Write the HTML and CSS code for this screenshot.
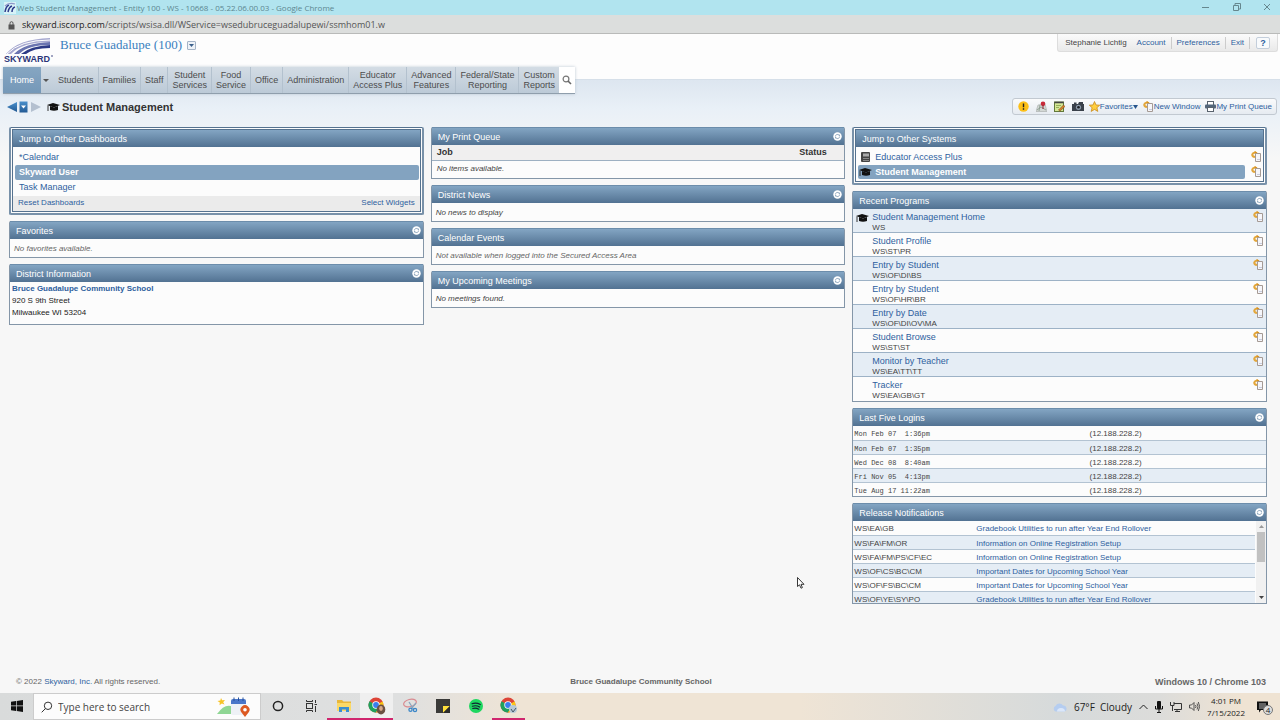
FILE: index.html
```html
<!DOCTYPE html>
<html lang="en">
<head>
	<meta charset="utf-8">
	<title>Web Student Management - Entity 100 - WS</title>
	<link rel="stylesheet" href="styles.css">
</head>
<body>
	<!-- shared icons -->
	<svg class="defs" width="0" height="0">
		<defs>
			<linearGradient id="blueGrad" x1="0" y1="0" x2="0" y2="1">
				<stop offset="0" stop-color="#4a90cc"/><stop offset="1" stop-color="#235a94"/>
			</linearGradient>
			<symbol id="cap" viewBox="0 0 13 10">
				<path d="M0 3 L6 1 L13 3 L7 5.400 Z" fill="#111"/>
				<path d="M3 4 L7 5.500 L11 4 V8 Q7 9.500 3 8 Z" fill="#111"/>
				<path d="M1 3.500 V9" stroke="#333" stroke-width="1"/>
			</symbol>
			<symbol id="newwin" viewBox="0 0 11 11">
				<path d="M4 6 Q1 5.500 1.300 3.500 Q2 1.500 5 1.500" fill="none" stroke="#e3a73c" stroke-width="2"/>
				<path d="M3.500 0 L6.500 1.500 L4 3.500 Z" fill="#d8901c"/>
				<path d="M4.500 2.500 H9.500 V10.500 H4.500 Z" fill="#f6f6fa" stroke="#a59a94"/>
				<path d="M6 8.500 H9" stroke="#c9cddd"/>
			</symbol>
			<symbol id="gear" viewBox="0 0 10 10">
				<circle cx="5" cy="5" r="4.700" fill="#fff"/>
				<path d="M2.700 5 A2.300 2.300 0 0 1 6.800 3.500 M7.300 5 A2.300 2.300 0 0 1 3.200 6.500" fill="none" stroke="#7391ad" stroke-width=".8"/>
				<path d="M6 4.300 H7.800 V2.600 Z M4 5.700 H2.200 V7.400 Z" fill="#7391ad"/>
			</symbol>
			<symbol id="chrome" viewBox="0 0 18 18">
				<circle cx="8" cy="8" r="7.500" fill="#dd4437"/>
				<path d="M8 8 L1.500 4.200 A7.500 7.500 0 0 0 8 15.500 L11.500 10 Z" fill="#1fa15d"/>
				<path d="M8 8 L14.600 4.500 A7.500 7.500 0 0 1 8 15.500 L11 9.700 Z" fill="#fbc613"/>
				<circle cx="8" cy="8" r="3.700" fill="#fff"/>
				<circle cx="8" cy="8" r="2.900" fill="#3b7ded"/>
			</symbol>
		</defs>
	</svg>

	<div class="titlebar">
		<svg width="12" height="12" viewBox="0 0 12 12"><rect width="12" height="12" fill="#fff" opacity=".5"/><path d="M1 10 Q2 4 5 3 M4 10 Q5 5 8 4 M8 10 Q8 6 11 5" fill="none" stroke="#2d3c8c" stroke-width="1.500"/><path d="M1 4 Q5 0 11 2" fill="none" stroke="#8c95c8" stroke-width="1.300"/></svg>
		<span class="wintitle">Web Student Management - Entity 100 - WS - 10668 - 05.22.06.00.03 - Google Chrome</span>
		<svg class="winbtns" width="70" height="10" viewBox="0 0 70 10" fill="none" stroke="#66878e" stroke-width="1"><path d="M0 4.500 H7"/><path d="M31.500 2.500 H36.500 V7.500 H31.500 Z M33 2 V0.500 H38.500 V6 H37"/><path d="M62 1 L68 7 M68 1 L62 7"/></svg>
	</div>
	<div class="urlbar">
		<svg width="7" height="9" viewBox="0 0 7 9"><rect x="0.500" y="3.500" width="6" height="5" fill="#555"/><path d="M2 4 V2.200 A1.500 1.500 0 0 1 5 2.200 V4" fill="none" stroke="#555"/></svg>
		<span class="url"><b>skyward.iscorp.com</b>/scripts/wsisa.dll/WService=wsedubruceguadalupewi/ssmhom01.w</span>
	</div>

	<div class="app">
		<div class="header">
			<div class="brand">
				<svg class="logo" width="52" height="26" viewBox="0 0 52 26" role="img" aria-label="Skyward">
					<path d="M2 16 Q14 1 46 0 V4 Q18 4 7 16 Z" fill="#a7a9d0"/>
					<path d="M3 16 Q16 2 46 2" fill="none" stroke="#fff" stroke-width="1"/>
					<path d="M10 16 Q20 5 46 4 V7 Q24 7 15 16 Z" fill="#6a74b0"/>
					<path d="M17 16 Q26 8 46 7 V10 Q29 10 22 16 Z" fill="#2c3a86"/>
					<text x="0" y="24" class="logotext">SKYWARD</text>
					<circle cx="48" cy="18" r=".8" fill="#2c3578"/>
				</svg>
				<a href="#" class="entity">Bruce Guadalupe (100)</a>
				<button type="button" class="entitybtn" aria-label="Change entity"><svg width="5" height="3" viewBox="0 0 5 3"><path d="M0 0 H5 L2.500 3 Z" fill="#3a5f8a"/></svg></button>
			</div>
			<div class="userlinks">
				<span>Stephanie Lichtig</span>
				<a href="#">Account</a>
				<a href="#">Preferences</a>
				<a href="#">Exit</a>
				<button type="button" class="help">?</button>
			</div>
		</div>

		<div class="nav">
			<a href="#" class="home">Home</a>
			<button type="button" class="caret" aria-label="Home menu"></button>
			<a href="#">Students</a>
			<a href="#">Families</a>
			<a href="#">Staff</a>
			<a href="#">Student<br>Services</a>
			<a href="#">Food<br>Service</a>
			<a href="#">Office</a>
			<a href="#">Administration</a>
			<a href="#">Educator<br>Access Plus</a>
			<a href="#">Advanced<br>Features</a>
			<a href="#">Federal/State<br>Reporting</a>
			<a href="#">Custom<br>Reports</a>
			<button type="button" class="search" aria-label="Search"><svg width="10" height="10" viewBox="0 0 10 10"><circle cx="4" cy="4" r="2.900" fill="none" stroke="#777" stroke-width="1.200"/><path d="M6 6 L9 9" stroke="#666" stroke-width="1.600"/></svg></button>
		</div>

		<div class="pagebar">
			<svg width="34" height="12" viewBox="0 0 34 12"><path d="M0 6 L10 1 V11 Z" fill="url(#blueGrad)"/><rect x="12.500" y="0.500" width="8" height="11" fill="url(#blueGrad)"/><path d="M14 4.500 H19 L16.500 7.500 Z" fill="#fff"/><path d="M24 1 L34 6 L24 11 Z" fill="#b4c0d0"/></svg>
			<svg class="pagecap" width="13" height="10"><use href="#cap"/></svg>
			<h1>Student Management</h1>
			<div class="tools">
				<a href="#" aria-label="Alerts"><svg width="11" height="11" viewBox="0 0 11 11"><circle cx="5.500" cy="5.500" r="5.200" fill="#fcbf17"/><path d="M5.500 2.500 V6.300 M5.500 7.300 V8.800" stroke="#222" stroke-width="1.400"/></svg></a>
				<a href="#" aria-label="Map"><svg width="11" height="11" viewBox="0 0 11 11"><path d="M0 10.500 L2 4 L9 3 L11 10.500 Z" fill="#d3d8d5" stroke="#a4a9a8" stroke-width=".6"/><path d="M1 9 L5 6 L10 9 M4 4 L3 10" stroke="#7b8f80" stroke-width=".7" fill="none"/><circle cx="7" cy="2.800" r="2.300" fill="#c72838"/><path d="M7 4 V8" stroke="#8f1f2c"/></svg></a>
				<a href="#" aria-label="Notes"><svg width="11" height="11" viewBox="0 0 11 11"><rect x="0.500" y="1" width="9" height="9.500" fill="#d5e896" stroke="#63783a"/><path d="M0.500 1.500 H9.500" stroke="#444" stroke-width="1.500"/><path d="M2 4.500 H7 M2 6.500 H5" stroke="#7c9440" stroke-width=".7"/><path d="M4.500 9 L9.500 4 L11 5.500 L6 10 Z" fill="#d9822b" stroke="#6a4018" stroke-width=".5"/></svg></a>
				<a href="#" aria-label="Screenshot"><svg width="12" height="11" viewBox="0 0 12 11"><path d="M0 3 H2 V1.500 H4.500 V3 H6 L7 1 H11 V3 H12 V10 H0 Z" fill="#39404a"/><circle cx="6.500" cy="6.300" r="2.600" fill="#8a98a8"/><circle cx="6.500" cy="6.300" r="1.300" fill="#1a1d22"/></svg></a>
				<a href="#"><svg width="11" height="11" viewBox="0 0 11 11"><path d="M5.500 0.500 L7 4 L10.700 4.200 L7.900 6.700 L8.800 10.400 L5.500 8.400 L2.200 10.400 L3.100 6.700 L0.300 4.200 L4 4 Z" fill="#ffcf3f" stroke="#c98a1b" stroke-width=".8"/></svg><span>Favorites</span><svg width="5" height="4" viewBox="0 0 5 4"><path d="M0 0 H5 L2.500 4 Z" fill="#27548c"/></svg></a>
				<a href="#"><svg width="11" height="11"><use href="#newwin"/></svg><span>New Window</span></a>
				<a href="#"><svg width="11" height="11" viewBox="0 0 11 11"><rect x="2.500" y="0.500" width="6" height="4" fill="#fff" stroke="#59636e"/><rect x="0" y="3.500" width="11" height="4" rx="1" fill="#53667a"/><rect x="2.500" y="6.500" width="6" height="4" fill="#fff" stroke="#59636e"/></svg><span>My Print Queue</span></a>
			</div>
		</div>

		<div class="columns">
			<div class="column">
				<div class="framed">
					<div class="inner">
						<h2>Jump to Other Dashboards</h2>
						<ul class="jump">
							<li><a href="#">*Calendar</a></li>
							<li class="current"><a href="#">Skyward User</a></li>
							<li><a href="#">Task Manager</a></li>
						</ul>
						<div class="jumpfoot"><a href="#">Reset Dashboards</a><a href="#">Select Widgets</a></div>
					</div>
				</div>
				<div class="widget">
					<h2>Favorites<svg width="9" height="9"><use href="#gear"/></svg></h2>
					<p class="note">No favorites available.</p>
				</div>
				<div class="widget">
					<h2>District Information<svg width="9" height="9"><use href="#gear"/></svg></h2>
					<div class="address">
						<a href="#">Bruce Guadalupe Community School</a><br>
						920 S 9th Street<br>
						Milwaukee WI 53204
					</div>
				</div>
			</div>

			<div class="column">
				<div class="widget">
					<h2>My Print Queue<svg width="9" height="9"><use href="#gear"/></svg></h2>
					<table class="queue">
						<tr><th>Job</th><th class="status">Status</th></tr>
						<tr><td colspan="2">No items available.</td></tr>
					</table>
				</div>
				<div class="widget">
					<h2>District News<svg width="9" height="9"><use href="#gear"/></svg></h2>
					<p class="note dark">No news to display</p>
				</div>
				<div class="widget">
					<h2>Calendar Events</h2>
					<p class="note">Not available when logged into the Secured Access Area</p>
				</div>
				<div class="widget">
					<h2>My Upcoming Meetings<svg width="9" height="9"><use href="#gear"/></svg></h2>
					<p class="note dark">No meetings found.</p>
				</div>
			</div>

			<div class="column">
				<div class="framed">
					<div class="inner">
						<h2>Jump to Other Systems</h2>
						<ul class="jump systems">
							<li><a href="#"><svg width="13" height="10" viewBox="0 0 13 10"><rect x="2" y="0" width="9" height="10" rx="1" fill="#444"/><rect x="4" y="1.500" width="6" height="3" fill="#aaa"/><path d="M4 6.500 H10 M4 8.500 H10" stroke="#888"/></svg>Educator Access Plus</a><svg width="11" height="11"><use href="#newwin"/></svg></li>
							<li class="current"><a href="#"><svg width="13" height="10"><use href="#cap"/></svg>Student Management</a><svg width="11" height="11"><use href="#newwin"/></svg></li>
						</ul>
					</div>
				</div>
				<div class="widget">
					<h2>Recent Programs<svg width="9" height="9"><use href="#gear"/></svg></h2>
					<ul class="recent">
						<li><svg class="rowicon" width="13" height="10"><use href="#cap"/></svg><div><a href="#">Student Management Home</a><span>WS</span></div><svg width="11" height="11"><use href="#newwin"/></svg></li>
						<li><i class="rowicon"></i><div><a href="#">Student Profile</a><span>WS\ST\PR</span></div><svg width="11" height="11"><use href="#newwin"/></svg></li>
						<li><i class="rowicon"></i><div><a href="#">Entry by Student</a><span>WS\OF\DI\BS</span></div><svg width="11" height="11"><use href="#newwin"/></svg></li>
						<li><i class="rowicon"></i><div><a href="#">Entry by Student</a><span>WS\OF\HR\BR</span></div><svg width="11" height="11"><use href="#newwin"/></svg></li>
						<li><i class="rowicon"></i><div><a href="#">Entry by Date</a><span>WS\OF\DI\OV\MA</span></div><svg width="11" height="11"><use href="#newwin"/></svg></li>
						<li><i class="rowicon"></i><div><a href="#">Student Browse</a><span>WS\ST\ST</span></div><svg width="11" height="11"><use href="#newwin"/></svg></li>
						<li><i class="rowicon"></i><div><a href="#">Monitor by Teacher</a><span>WS\EA\TT\TT</span></div><svg width="11" height="11"><use href="#newwin"/></svg></li>
						<li><i class="rowicon"></i><div><a href="#">Tracker</a><span>WS\EA\GB\GT</span></div><svg width="11" height="11"><use href="#newwin"/></svg></li>
					</ul>
				</div>
				<div class="widget">
					<h2>Last Five Logins<svg width="9" height="9"><use href="#gear"/></svg></h2>
					<table class="rows logins">
						<tr><td>Mon Feb 07  1:36pm</td><td>(12.188.228.2)</td></tr>
						<tr><td>Mon Feb 07  1:35pm</td><td>(12.188.228.2)</td></tr>
						<tr><td>Wed Dec 08  8:40am</td><td>(12.188.228.2)</td></tr>
						<tr><td>Fri Nov 05  4:13pm</td><td>(12.188.228.2)</td></tr>
						<tr><td>Tue Aug 17 11:22am</td><td>(12.188.228.2)</td></tr>
					</table>
				</div>
				<div class="widget">
					<h2>Release Notifications<svg width="9" height="9"><use href="#gear"/></svg></h2>
					<div class="scroller">
						<table class="rows releases">
							<tr><td>WS\EA\GB</td><td><a href="#">Gradebook Utilities to run after Year End Rollover</a></td></tr>
							<tr><td>WS\FA\FM\OR</td><td><a href="#">Information on Online Registration Setup</a></td></tr>
							<tr><td>WS\FA\FM\PS\CF\EC</td><td><a href="#">Information on Online Registration Setup</a></td></tr>
							<tr><td>WS\OF\CS\BC\CM</td><td><a href="#">Important Dates for Upcoming School Year</a></td></tr>
							<tr><td>WS\OF\FS\BC\CM</td><td><a href="#">Important Dates for Upcoming School Year</a></td></tr>
							<tr><td>WS\OF\YE\SY\PO</td><td><a href="#">Gradebook Utilities to run after Year End Rollover</a></td></tr>
						</table>
						<div class="scrollbar">
							<svg width="5" height="3" viewBox="0 0 5 3"><path d="M0 3 H5 L2.500 0 Z" fill="#999"/></svg>
							<div class="thumb"></div>
							<svg width="5" height="3" viewBox="0 0 5 3"><path d="M0 0 H5 L2.500 3 Z" fill="#444"/></svg>
						</div>
					</div>
				</div>
			</div>
		</div>

		<div class="footer">
			<span>&copy; 2022 <a href="#">Skyward, Inc.</a> All rights reserved.</span>
			<b>Bruce Guadalupe Community School</b>
			<b class="platform">Windows 10 / Chrome 103</b>
		</div>

		<svg class="pointer" width="8" height="12" viewBox="0 0 8 12"><path d="M0.500 0.500 V9.500 L2.500 7.800 L4 11.200 L5.400 10.600 L4 7.300 H7 Z" fill="#fff" stroke="#222" stroke-width=".9"/></svg>
	</div>

	<div class="taskbar">
		<button type="button" class="tile start" aria-label="Start"><svg width="12" height="12" viewBox="0 0 12 12"><path d="M0 1.800 L5 1 V5.500 H0 Z M5.700 0.900 L12 0 V5.500 H5.700 Z M0 6.300 H5 V11 L0 10.200 Z M5.700 6.300 H12 V12 L5.700 11.100 Z" fill="#111"/></svg></button>
		<div class="tasksearch">
			<svg width="12" height="12" viewBox="0 0 12 12" fill="none" stroke="#333"><circle cx="7" cy="4.800" r="3.700"/><path d="M4.500 7.500 L0.700 11.300"/></svg>
			<input type="text" placeholder="Type here to search" aria-label="Type here to search">
			<svg width="34" height="20" viewBox="0 0 34 20"><path d="M4 1 L5.200 3.300 L8 3 L6.200 5.200 L7.500 7.500 L4.800 6.500 L2.500 8.200 L2.800 5.500 L0.500 4 L3.300 3.500 Z" fill="#f7c325"/><path d="M0 17 Q7 7 14 9 V17 Z" fill="#8fd694"/><rect x="14" y="3" width="15" height="15" rx="2" fill="#eef1f6"/><path d="M14 7 V4 Q14 2 16 2 H27 Q29 2 29 4 V7 Z" fill="#4a76c9"/><path d="M17 0.500 V4 M21.500 0.500 V4 M26 0.500 V4" stroke="#27519d"/><path d="M28 20 L24.500 15.500 A4.500 4.500 0 1 1 31.500 15.500 Z" fill="#dd5a22"/><circle cx="28" cy="12.700" r="1.800" fill="#fff"/></svg>
		</div>
		<button type="button" class="tile" aria-label="Cortana"><svg width="12" height="12" viewBox="0 0 12 12"><circle cx="6" cy="6" r="4.600" fill="none" stroke="#222" stroke-width="1.500"/></svg></button>
		<button type="button" class="tile" aria-label="Task View"><svg width="12" height="12" viewBox="0 0 12 12" fill="none" stroke="#333"><rect x="1.500" y="3.500" width="6" height="5"/><path d="M1.500 0 V1.500 H7.500 V0 M1.500 12 V10.500 H7.500 V12 M10.500 0 V3 M10.500 6 V12 M9.500 4.500 H12"/></svg></button>
		<button type="button" class="tile running" aria-label="File Explorer"><svg width="16" height="14" viewBox="0 0 16 14"><path d="M1 1 H6 L7.500 2.500 H15 V12 H1 Z" fill="#e9b73a"/><rect x="1" y="4" width="14" height="8" fill="#fbd967"/><path d="M3 13 V8 H13 V13 H10 V10.500 H6 V13 Z" fill="#3b8ed0"/></svg></button>
		<button type="button" class="tile running active" aria-label="Chrome"><svg width="18" height="18" viewBox="0 0 18 18"><use href="#chrome"/><ellipse cx="13" cy="12.500" rx="4.300" ry="5" fill="#6b5143"/><ellipse cx="13" cy="11.500" rx="1.800" ry="2.400" fill="#d8a88a"/></svg></button>
		<button type="button" class="tile" aria-label="Snip"><svg width="16" height="15" viewBox="0 0 16 15" fill="none"><ellipse cx="8" cy="5" rx="6.500" ry="3.600" stroke="#d9898f" stroke-width="1.200" transform="rotate(-14 8 5)"/><path d="M7 4 L12 12 M14 5 L9 11" stroke="#8aa6bd" stroke-width="1.300"/><circle cx="8.500" cy="11.700" r="1.600" stroke="#3a86c8" stroke-width="1.300"/><circle cx="13" cy="12" r="1.600" stroke="#3a86c8" stroke-width="1.300"/></svg></button>
		<button type="button" class="tile" aria-label="Sticky Notes"><svg width="14" height="14" viewBox="0 0 14 14"><rect width="14" height="14" fill="#3a3a38"/><path d="M7 7 H14 L7 14 Z" fill="#ffe03a"/><path d="M14 7 V14 H7 Z" fill="#2c2c2a"/></svg></button>
		<button type="button" class="tile" aria-label="Spotify"><svg width="14" height="14" viewBox="0 0 14 14"><circle cx="7" cy="7" r="7" fill="#1ed760"/><path d="M3 4.700 Q7.500 3.300 11.300 5.500 M3.400 7.200 Q7.300 6 10.600 8 M3.800 9.500 Q7 8.600 9.800 10.200" fill="none" stroke="#123" stroke-width="1.200" stroke-linecap="round"/></svg></button>
		<button type="button" class="tile running" aria-label="Chrome, second profile"><svg width="18" height="18" viewBox="0 0 18 18"><use href="#chrome"/><circle cx="13" cy="12" r="4" fill="#b6c9d6"/><path d="M11 12 L13 15 L16 11" fill="none" stroke="#456" stroke-width="1"/></svg></button>
		<div class="tray">
			<svg width="15" height="12" viewBox="0 0 15 12"><path d="M3.500 10.500 A3 3 0 0 1 3.500 5 A4.200 4.200 0 0 1 11 4.500 A3 3 0 0 1 12 10.500 Z" fill="#b5cdf0"/><path d="M5 10.500 Q5 7 9 7 Q13 7 13 10.500 Z" fill="#dbe7fa"/></svg>
			<span class="weather">67°F&nbsp; Cloudy</span>
			<svg width="9" height="6" viewBox="0 0 9 6"><path d="M0.500 5 L4.500 1 L8.500 5" fill="none" stroke="#222"/></svg>
			<svg width="8" height="12" viewBox="0 0 8 12"><rect x="2" y="0" width="4" height="8" rx="1" fill="#111"/><path d="M0.500 5 V8 H7.500 V5 M4 8 V11.500 M2 11.500 H6" fill="none" stroke="#111"/></svg>
			<svg width="12" height="11" viewBox="0 0 12 11" fill="none" stroke="#333"><path d="M4 2.500 H11.500 V8.500 H4 M7 8.500 V10.500 M5 10.500 H10 M2.500 5 V10 M0.500 1 V4.500 H4 V1"/></svg>
			<svg width="11" height="11" viewBox="0 0 11 11" fill="none" stroke="#444" stroke-width=".9"><path d="M0.500 4 H2.500 L5 1.500 V9.500 L2.500 7 H0.500 Z M6.500 4 Q7.500 5.500 6.500 7 M8 2.500 Q10 5.500 8 8.500 M9.300 1 Q12 5.500 9.300 10"/></svg>
			<div class="clock">4:01 PM<br>7/15/2022</div>
			<div class="action"><svg width="12" height="12" viewBox="0 0 12 12"><path d="M0 0.500 H11 V9 H4 L2 11.500 V9 H0 Z" fill="#111"/><path d="M2 3 H9 M2 5 H9 M2 7 H7" stroke="#ddd" stroke-width=".8"/></svg><span class="badge">4</span></div>
		</div>
	</div>
</body>
</html>
```
FILE: styles.css
```css
* {
	box-sizing: border-box;
}
body {
	margin: 0;
	min-height: 100vh;
	display: flex;
	flex-direction: column;
	font-family: "Liberation Sans", Arial, sans-serif;
	font-size: 8px;
	line-height: 12px;
	color: #444;
	background: #f7f7f7;
}
a {
	color: #2e5f9e;
	text-decoration: none;
}
button {
	font-family: inherit;
	border: 0;
	padding: 0;
	margin: 0;
	background: none;
}
h1, h2, p, ul {
	margin: 0;
	padding: 0;
	list-style: none;
}
svg {
	flex: none;
	display: block;
}
.defs {
	position: absolute;
}

/* browser window */
.titlebar {
	display: flex;
	align-items: center;
	height: 15px;
	padding: 0 8px 0 4px;
	gap: 1px;
	background: #b1e4ef;
	color: #5d8790;
	font-family: "Open Sans", sans-serif;
}
.winbtns {
	margin-left: auto;
}
.urlbar {
	display: flex;
	align-items: center;
	gap: 7px;
	height: 19px;
	padding: 2px 0 0 8px;
	background: #dcdedd;
	border-bottom: 1px solid #b9bab9;
	color: #555;
	font-family: "Open Sans", sans-serif;
	font-size: 9px;
}
.url b {
	font-weight: normal;
	color: #222;
}

/* page header */
.app {
	position: relative;
	flex: 1;
	display: flex;
	flex-direction: column;
	background: linear-gradient(#fdfdfd 45px, #cfd9e2 45px, #dde6f0 46px, #e9f0f7 75px, #f7f7f7 125px);
}
.header {
	display: flex;
	justify-content: space-between;
	align-items: flex-start;
	height: 33px;
	padding: 0 2px 0 4px;
}
.brand {
	display: flex;
	align-items: flex-start;
	padding-top: 4px;
}
.logotext {
	font-size: 9px;
	font-weight: bold;
	fill: #2c3578;
}
.entity {
	margin: 0 5px 0 4px;
	font-family: "Liberation Serif", "Times New Roman", serif;
	font-size: 13px;
	line-height: 14px;
	color: #3a80bd;
}
.entitybtn {
	display: flex;
	align-items: center;
	justify-content: center;
	width: 9px;
	height: 9px;
	margin-top: 3px;
	border: 1px solid #a5b4c6;
	border-radius: 1px;
	background: #eef2f7;
}
.userlinks {
	display: flex;
	align-items: center;
	height: 18px;
	padding: 0 7px 0 2px;
	background: linear-gradient(#fbfbfb, #e9e9e9);
	border: 1px solid #ddd;
	border-top: 0;
	border-radius: 0 0 3px 3px;
}
.userlinks span,
.userlinks a {
	padding: 0 5px;
}
.userlinks a {
	border-right: 1px solid #ccc;
}
.help {
	width: 14px;
	height: 12px;
	margin-left: 6px;
	border: 1px solid #c3cedb;
	border-radius: 2px;
	background: #f8fafc;
	color: #2e5f9e;
	font-size: 9px;
	line-height: 10px;
	font-weight: bold;
}

/* main menu */
.nav {
	display: flex;
	align-self: flex-start;
	height: 27px;
	margin-left: 3px;
	background: linear-gradient(#d3dce4, #bccad7);
	border-bottom: 1px solid #8f9eac;
	box-shadow: 0 0 3px #bcc7d2;
	font-size: 9px;
	line-height: 10px;
	text-align: center;
}
.nav a {
	display: flex;
	align-items: center;
	padding: 0 4px;
	border-right: 1px solid #b3c1ce;
	color: #4c4c4c;
}
.nav a.home {
	padding: 0 7px;
	background: linear-gradient(#86a6c2, #7598b8);
	border: 0;
	color: #fff;
}
.nav .caret {
	align-self: center;
	margin: 0 5px 0 2px;
	border: 3px solid transparent;
	border-top: 3px solid #555;
	border-bottom: 0;
}
.nav a:nth-last-child(2) {
	border-right: 0;
}
.nav .search {
	display: flex;
	align-items: center;
	justify-content: center;
	width: 16px;
	background: #fff;
}

/* page title and toolbar */
.pagebar {
	display: flex;
	align-items: center;
	height: 17px;
	margin: 4px 3px 12px 7px;
}
.pagecap {
	margin: 0 2px 0 6px;
}
h1 {
	font-size: 11px;
	line-height: 14px;
	color: #333;
}
.tools {
	display: flex;
	align-items: center;
	gap: 5px;
	height: 17px;
	margin-left: auto;
	padding: 0 4px 0 5px;
	background: linear-gradient(#fafbfc, #e6ebf1);
	border: 1px solid #c2c9d1;
	border-radius: 3px;
}
.tools a {
	display: flex;
	align-items: center;
}
.tools a:nth-child(-n+3) {
	margin-right: 2px;
}

/* widgets */
.columns {
	display: grid;
	grid-template-columns: repeat(3, 1fr);
	gap: 7px;
	padding: 0 13px 0 9px;
}
.column {
	display: flex;
	flex-direction: column;
	gap: 6px;
	min-width: 0;
}
.widget {
	border: 1px solid #8496a8;
	border-top: 0;
	border-radius: 2px 2px 0 0;
	background: #fcfcfc;
}
h2 {
	display: flex;
	align-items: center;
	justify-content: space-between;
	height: 18px;
	padding: 0 2px 0 6px;
	background: linear-gradient(#83a5c3, #527292);
	border-top: 1px solid #6c8dab;
	font-size: 9px;
	font-weight: normal;
	color: #fff;
}
.note {
	height: 18px;
	padding: 1px 4px;
	line-height: 18px;
	font-style: italic;
	color: #666;
}
.note.dark {
	color: #444;
}
.framed {
	padding: 1px;
	border: 2px solid #7891a9;
	border-top: 1px solid #55728f;
	border-radius: 2px;
	background: #fcfcfc;
}
.inner {
	border: 1px solid #55728f;
	border-top: 0;
	background: #fcfcfc;
}
.framed h2 {
	border-top-color: #55728f;
}
.jump {
	padding: 3px 1px 1px 2px;
	font-size: 9px;
	line-height: 14px;
}
.jump li {
	height: 15px;
	padding: 0 4px;
}
.jump .current,
.systems .current a {
	background: #83a3c0;
	border-radius: 2px;
}
.jump .current a {
	color: #fff;
	font-weight: bold;
}
.jumpfoot {
	display: flex;
	justify-content: space-between;
	padding: 1px 5px;
	height: 15px;
	background: #ebebeb;
}
.jump.systems {
	padding-top: 2px;
	padding-bottom: 2px;
}
.systems li {
	display: flex;
	align-items: center;
	gap: 6px;
	padding: 0;
}
.systems a {
	flex: 1;
	display: flex;
	align-items: center;
	gap: 3px;
	padding-left: 1px;
}
.systems .current {
	background: none;
}
.address {
	height: 42px;
	padding: 1px 2px;
	color: #222;
}
.address a {
	font-weight: bold;
}
table {
	width: 100%;
	border-collapse: collapse;
}
th, td {
	padding: 0 5px;
	text-align: left;
}
.queue th {
	height: 15px;
	background: #f0efef;
	border-bottom: 1px solid #9db0c2;
	color: #333;
	font-size: 9px;
}
.queue .status {
	width: 50px;
}
.queue td {
	height: 18px;
	font-style: italic;
}
.recent li {
	display: flex;
	align-items: flex-start;
	gap: 3px;
	height: 24px;
	padding: 2px 2px 0 3px;
	border-bottom: 1px solid #9db2c6;
}
.recent li:last-child {
	border-bottom: 0;
}
.recent li:nth-child(odd),
.rows.releases tr:nth-child(even),
.rows.logins tr:nth-child(even) {
	background: #e5edf5;
}
.recent .rowicon {
	width: 13px;
	margin-top: 2px;
}
.recent div {
	flex: 1;
}
.recent a {
	display: block;
	font-size: 9px;
	line-height: 12px;
}
.recent span {
	display: block;
	line-height: 10px;
}
.rows td {
	height: 14px;
	padding: 3px 1px 0;
	line-height: 10px;
	border-bottom: 1px solid #b3c3d2;
}
.rows tr:last-child td {
	border-bottom: 0;
}
.logins td:first-child {
	width: 57%;
	font-family: "Liberation Mono", "Courier New", monospace;
	font-size: 7px;
	white-space: pre;
}
.releases td:first-child {
	width: 122px;
}
.scroller {
	display: flex;
	align-items: flex-start;
	height: 82px;
	overflow: hidden;
}
.scrollbar {
	display: flex;
	flex-direction: column;
	align-items: center;
	align-self: stretch;
	width: 10px;
	margin-left: 1px;
	padding: 4px 0;
	background: #f1f1f1;
}
.thumb {
	width: 8px;
	height: 30px;
	margin: 4px 0 auto;
	background: #c1c1c1;
}

.footer {
	display: grid;
	grid-template-columns: 1fr auto 1fr;
	margin-top: auto;
	padding: 0 14px 5px 16px;
	color: #666;
}
.platform {
	font-size: 9px;
	text-align: right;
}
.pointer {
	position: absolute;
	left: 797px;
	top: 543px;
}

/* windows taskbar */
.taskbar {
	display: flex;
	height: 27px;
	background: linear-gradient(90deg, #d9dbdb, #dfe0e0 400px, #efe4d5 520px, #efe4d5 800px, #d6dadb 1060px, #dcdcda 1160px, #efe3d3 1240px);
	font-family: "Open Sans", sans-serif;
	color: #222;
}
.tile {
	display: flex;
	align-items: center;
	justify-content: center;
	width: 33px;
	border-bottom: 2px solid transparent;
}
.tile.running {
	border-color: #d0266e;
}
.tile.active {
	background: #efefef;
}
.tasksearch {
	display: flex;
	align-items: center;
	gap: 3px;
	width: 228px;
	padding: 0 9px 0 7px;
	border: 1px solid #ccc;
	background: #fcfcfc;
}
.tasksearch input {
	flex: 1;
	min-width: 0;
	border: 0;
	background: none;
	font-family: inherit;
	font-size: 10px;
}
.tasksearch input::placeholder {
	color: #444;
}
.tray {
	display: flex;
	align-items: center;
	gap: 7px;
	margin-left: auto;
	padding-right: 11px;
}
.weather {
	font-size: 10px;
}
.clock {
	line-height: 12px;
	text-align: center;
}
.action {
	position: relative;
	margin-left: 5px;
}
.badge {
	position: absolute;
	left: 6px;
	top: 4px;
	width: 10px;
	height: 10px;
	border: 1px solid #777;
	border-radius: 50%;
	background: #ddd;
	font-size: 8px;
	line-height: 8px;
	text-align: center;
}
```
